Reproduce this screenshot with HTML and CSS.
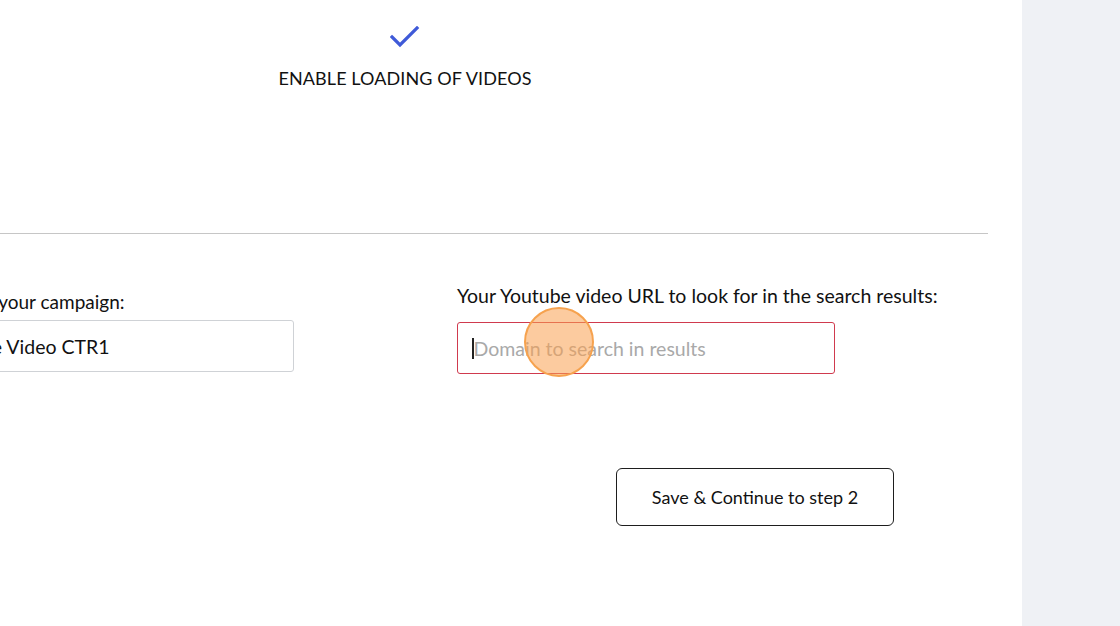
FILE: index.html
```html
<!DOCTYPE html>
<html>
<head>
<meta charset="utf-8">
<link rel="stylesheet" href="styles.css">
</head>
<body>
<div class="page">
  <main class="main">
    <section class="step">
      <svg class="check" width="30" height="22" viewBox="0 0 30 22"><path d="M2 11 L10 19 L27 2" fill="none" stroke="#3f5ad8" stroke-width="3.2" stroke-linecap="square"/></svg>
      <div class="step-title">ENABLE LOADING OF VIDEOS</div>
    </section>
    <hr class="divider">
    <section class="form">
      <div class="field field-left">
        <label class="label">Name for your campaign:</label>
        <div class="input">Youtube Video CTR1</div>
      </div>
      <div class="field">
        <label class="label">Your Youtube video URL to look for in the search results:</label>
        <div class="input input-error"><span class="caret"></span><span class="placeholder">Domain to search in results</span>
          <span class="click"></span>
        </div>
      </div>
    </section>
    <div class="actions">
      <button class="btn">Save &amp; Continue to step 2</button>
    </div>
  </main>
  <aside class="side"></aside>
</div>
</body>
</html>
```
FILE: styles.css
```css
* { box-sizing: border-box; }
html, body { margin: 0; padding: 0; }
body {
  font-family: Lato, "Open Sans", sans-serif;
  color: #111;
  background: #fff;
  overflow: hidden;
}
.page {
  display: flex;
  width: 1120px;
  height: 626px;
}
.main {
  width: 1022px;
  background: #fff;
  overflow: hidden;
}
.side {
  flex: 1;
  background: #eff1f5;
}
.step {
  width: 810px;
  display: flex;
  flex-direction: column;
  align-items: center;
  padding-top: 26px;
}
.check { display: block; }
.step-title {
  margin-top: 19px;
  font-size: 18px;
  letter-spacing: 0.1px;
}
.divider {
  margin: 144px 0 0 0;
  width: 988px;
  border: 0;
  border-top: 1px solid #c6c6c6;
  height: 0;
}
.form {
  display: flex;
  gap: 163px;
  margin-left: -84px;
  margin-top: 50px;
}
.field {
  width: 378px;
  display: flex;
  flex-direction: column;
}
.label {
  font-size: 19.5px;
  line-height: 24px;
  margin-bottom: 14px;
  white-space: nowrap;
}
.field-left { margin-top: 6px; }
.field-left .label { margin-bottom: 6px; font-size: 19px; }
.input {
  position: relative;
  height: 52px;
  border: 1px solid #cfd2d6;
  border-radius: 3px;
  padding: 0 14px;
  display: flex;
  align-items: center;
  font-size: 19.5px;
  color: #111;
}
.input-error {
  border: 1.5px solid #d03a4e;
}
.caret {
  width: 1.5px;
  height: 21px;
  background: #222;
}
.placeholder { color: #a9a9a9; }
.click {
  position: absolute;
  left: 66px;
  top: -16px;
  width: 70px;
  height: 70px;
  border-radius: 50%;
  background: rgba(250, 160, 80, 0.55);
  border: 2px solid #f6a24e;
}
.actions {
  display: flex;
  margin-top: 94px;
  padding-left: 616px;
}
.btn {
  width: 278px;
  height: 58px;
  border: 1.5px solid #1e1e1e;
  border-radius: 6px;
  background: #fff;
  font-family: Lato, "Open Sans", sans-serif;
  font-size: 18px;
  color: #111;
}
```
